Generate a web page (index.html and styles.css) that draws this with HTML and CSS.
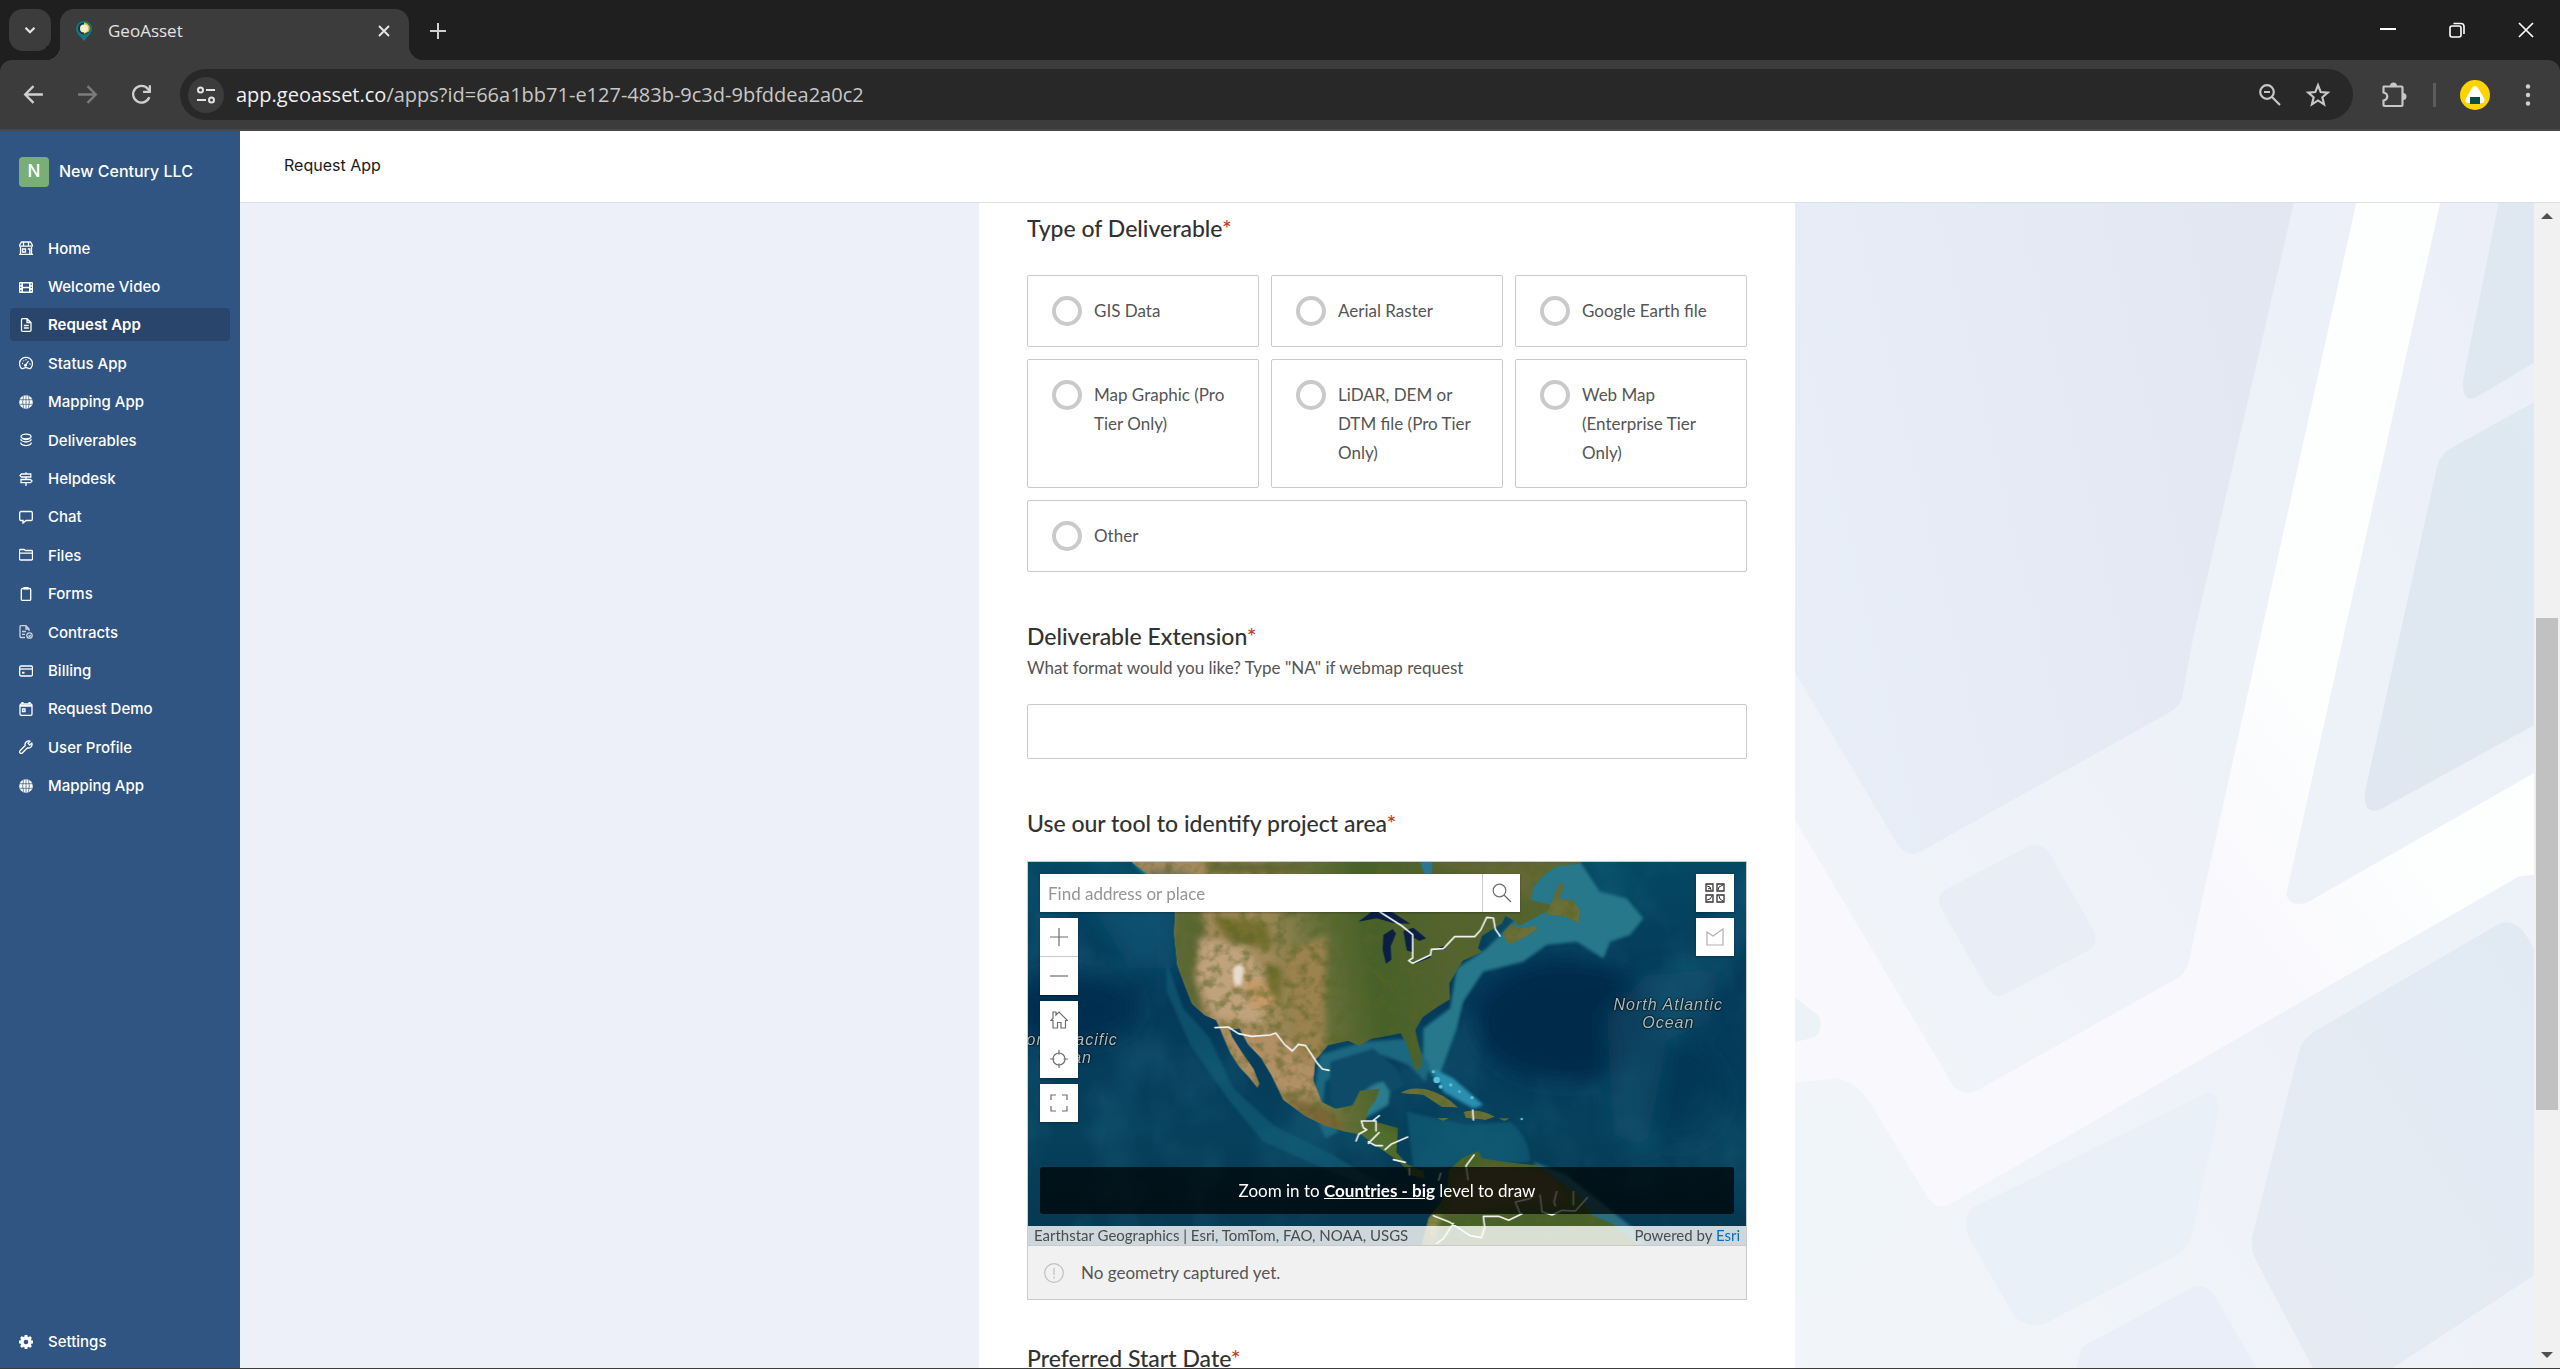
FILE: index.html
```html
<!DOCTYPE html>
<html lang="en">
<head>
<meta charset="utf-8">
<title>GeoAsset</title>
<meta name="viewport" content="width=device-width, initial-scale=1">
<link rel="stylesheet" href="styles.css">
</head>
<body>
<div class="browser">
  <div class="tabstrip">
    <button class="tab-search" aria-label="Search tabs"><svg viewBox="0 0 24 24" width="18" height="18"><path d="M6 9l6 6 6-6" fill="none" stroke="#e3e3e3" stroke-width="3"/></svg></button>
    <div class="tab">
      <svg class="favicon" viewBox="0 0 16 20" width="16" height="20"><path d="M8 0a8 8 0 0 1 8 8c0 4-4 7-8 12C4 15 0 12 0 8a8 8 0 0 1 8-8z" fill="#14787f"/><circle cx="8" cy="7.500" r="6" fill="#16344f"/><path d="M8 1.500a6 6 0 0 1 5 9L8 13z" fill="#e9b949"/><circle cx="8" cy="7.500" r="4" fill="#f4f0c8"/></svg>
      <span class="tab-title">GeoAsset</span>
      <button class="icon-btn" aria-label="Close tab"><svg viewBox="0 0 12 12" width="12" height="12"><path d="M1 1l10 10M11 1L1 11" stroke="#e3e3e3" stroke-width="2"/></svg></button>
    </div>
    <button class="icon-btn new-tab" aria-label="New tab"><svg viewBox="0 0 16 16" width="16" height="16"><path d="M8 0v16M0 8h16" stroke="#d0d0d0" stroke-width="2"/></svg></button>
    <div class="window-controls">
      <button class="icon-btn" aria-label="Minimize"><svg viewBox="0 0 16 16" width="16" height="16"><path d="M0 7h16" stroke="#fff" stroke-width="2"/></svg></button>
      <button class="icon-btn" aria-label="Restore"><svg viewBox="0 0 16 16" width="16" height="16"><g fill="none" stroke="#fff" stroke-width="1.600"><rect x="1" y="4" width="11" height="11" rx="2"/><path d="M4.500 1.500H12a3 3 0 0 1 3 3V12"/></g></svg></button>
      <button class="icon-btn" aria-label="Close"><svg viewBox="0 0 16 16" width="16" height="16"><path d="M1 1l14 14M15 1L1 15" stroke="#fff" stroke-width="1.700"/></svg></button>
    </div>
  </div>
  <div class="toolbar">
    <button class="icon-btn nav-btn" aria-label="Back"><svg viewBox="0 0 24 24" width="25" height="25"><path d="M21 12H4M12 4l-8 8 8 8" fill="none" stroke="#d0d0d0" stroke-width="2.200"/></svg></button>
    <button class="icon-btn nav-btn" aria-label="Forward"><svg viewBox="0 0 24 24" width="25" height="25"><path d="M3 12h17M12 4l8 8-8 8" fill="none" stroke="#7c7c7c" stroke-width="2.200"/></svg></button>
    <button class="icon-btn nav-btn" aria-label="Reload"><svg viewBox="0 0 24 24" width="25" height="25"><path d="M19.500 14.500A8 8 0 1 1 18 6.500l2 2.500" fill="none" stroke="#d0d0d0" stroke-width="2.200"/><path d="M20 3v6.500h-6.500" fill="none" stroke="#d0d0d0" stroke-width="2.200"/></svg></button>
    <div class="omnibox">
      <button class="site-info" aria-label="Site information"><svg viewBox="0 0 20 20" width="20" height="20"><g fill="none" stroke="#e3e3e3" stroke-width="2"><circle cx="4.500" cy="5" r="2.500"/><path d="M10 5h9M1 15h9"/><circle cx="15.500" cy="15" r="2.500"/></g></svg></button>
      <span class="url"><span class="url-host">app.geoasset.co</span>/apps?id=66a1bb71-e127-483b-9c3d-9bfddea2a0c2</span>
      <button class="icon-btn nav-btn" aria-label="Zoom"><svg viewBox="0 0 24 24" width="24" height="24"><g fill="none" stroke="#c7c7c7" stroke-width="2.200"><circle cx="9" cy="9" r="6.800"/><path d="M14 14l8 8M6 9h6"/></g></svg></button>
      <button class="icon-btn nav-btn" aria-label="Bookmark this tab"><svg viewBox="0 0 24 24" width="26" height="26"><path d="M12 3l2.500 6.300 6.500.5-5 4.300 1.600 6.500L12 17l-5.600 3.600L8 14.100 3 9.800l6.500-.5z" fill="none" stroke="#c7c7c7" stroke-width="2"/></svg></button>
    </div>
    <button class="icon-btn nav-btn extensions" aria-label="Extensions"><svg viewBox="0 0 26 26" width="26" height="26"><path d="M3 4.500h17.500a1 1 0 0 1 1 1V23a1 1 0 0 1-1 1h-17a1 1 0 0 1-1-1v-4.500c5-1 5-7 0-8V5.500a1 1 0 0 1 .5-1z" fill="none" stroke="#c7c7c7" stroke-width="2.200"/><path d="M9 4a3.500 3.500 0 0 1 7 0zM22 11a3.500 3.500 0 0 1 0 7z" fill="#c7c7c7"/></svg></button>
    <span class="toolbar-divider"></span>
    <button class="icon-btn profile" aria-label="Profile"><svg viewBox="0 0 30 30" width="30" height="30"><circle cx="15" cy="15" r="15" fill="#fdd400"/><path d="M12 8q3-4 6 0l6 10q2 5-3 5H9q-5 0-3-5z" fill="#fff"/><path d="M10 17h10v7H10z" fill="#0a4b46"/></svg></button>
    <button class="icon-btn menu" aria-label="Menu"><svg viewBox="0 0 6 22" width="6" height="22"><g fill="#d0d0d0"><circle cx="3" cy="2.500" r="2.200"/><circle cx="3" cy="11" r="2.200"/><circle cx="3" cy="19.500" r="2.200"/></g></svg></button>
  </div>
</div>

<div class="app">
  <aside class="sidebar">
    <div class="org"><span class="org-logo">N</span><span class="org-name">New Century LLC</span></div>
    <nav class="nav" aria-label="Main">
      <a href="#"><svg viewBox="0 0 14 14"><path d="M2.500 1h9L13.300 4v1.200H.7V4z" class="ln"/><path d="M1.500 6v7M12.500 6v7M3.500 8h3v3h-3zM8.800 8h2v5M0 13.300h14M4.500 1v4M9.500 1v4" class="ln"/></svg>Home</a>
      <a href="#"><svg viewBox="0 0 14 14"><path fill-rule="evenodd" d="M1 2h12a1 1 0 0 1 1 1v9a1 1 0 0 1-1 1H1a1 1 0 0 1-1-1V3a1 1 0 0 1 1-1zm3 1.500v3.200h6V3.500zm0 4.700v3.300h6V8.200zM1.200 3.500v1.400h1.200V3.500zm0 3.200v1.400h1.200V6.700zm0 3.200v1.400h1.200V9.900zm10.400-6.400v1.400h1.200V3.500zm0 3.200v1.400h1.200V6.700zm0 3.200v1.400h1.200V9.900z" fill="#fff"/></svg>Welcome Video</a>
      <a href="#" class="active" aria-current="page"><svg viewBox="0 0 14 14"><path d="M3.500.7H8L12 4.500v7.800a1 1 0 0 1-1 1H3.500a1 1 0 0 1-1-1V1.700a1 1 0 0 1 1-1zM8 1v3.500h4M4.800 7.500h5M4.800 10h5" class="ln"/></svg>Request App</a>
      <a href="#"><svg viewBox="0 0 14 14"><path d="M2.500 12.500C-2 7 2 1.300 7 1.300s9 5.700 4.500 11.200c-1.500.7-2-.8-4.500-.8s-3 1.500-4.500.8z" class="ln"/><path d="M6.500 9.500L9.500 5M3 7.500h1M10.500 8h1M4.500 4.500l.5.500M7 3.200v1" class="ln"/><circle cx="6.500" cy="9.300" r="1.500" fill="#fff"/></svg>Status App</a>
      <a href="#"><svg viewBox="0 0 14 14"><circle cx="7" cy="7" r="6.800" fill="#fff"/><path d="M7 .5v13M1 4.700h12M1 9.300h12M4.500 1.200q-1.600 5.800 0 11.600M9.500 1.200q1.600 5.800 0 11.600" class="cut"/></svg>Mapping App</a>
      <a href="#"><svg viewBox="0 0 14 14"><ellipse cx="7" cy="3.500" rx="5" ry="2.300" class="ln"/><path d="M2 6q-1 2 5 3 6-1 5-3M2 9.500q-1 2.500 5 3.200 6-.7 5-3.200M3 5.500q4 2 8 0" class="ln"/></svg>Deliverables</a>
      <a href="#"><svg viewBox="0 0 14 14"><path d="M2.500 2h9.300v3H2.500L1 3.500zM2 7.500h9.500L13 9l-1.500 1.700H2zM7 .3V2M7 5v2.500M7 10.700V14" class="ln"/></svg>Helpdesk</a>
      <a href="#"><svg viewBox="0 0 14 14"><path d="M2 1.500h10a1.300 1.300 0 0 1 1.300 1.300v6.400A1.300 1.300 0 0 1 12 10.500H7L4 13v-2.500H2A1.300 1.300 0 0 1 .7 9.200V2.800A1.300 1.300 0 0 1 2 1.500z" class="ln"/></svg>Chat</a>
      <a href="#"><svg viewBox="0 0 14 14"><path d="M.7 5.200h12.600M1.500 1.500H5l1.500 1h6a1 1 0 0 1 1 1V11a1 1 0 0 1-1 1h-11a1 1 0 0 1-1-1V2.500a1 1 0 0 1 1-1z" class="ln"/></svg>Files</a>
      <a href="#"><svg viewBox="0 0 14 14"><rect x="2.300" y="1.500" width="9.400" height="12" rx="1.300" class="ln"/><path d="M4.500 0h5v2.500h-5z" fill="#fff"/></svg>Forms</a>
      <a href="#"><svg viewBox="0 0 14 14" class="faint"><path d="M6 12.500H2a1 1 0 0 1-1-1V1.700a1 1 0 0 1 1-1h5L10 4v2M7 1v3h3M3 6.500h4M3 9.300h3" class="ln"/><circle cx="10.500" cy="10.500" r="2.700" class="ln"/><path d="M9.500 10.500l1 1 1.200-1.500" class="ln"/></svg>Contracts</a>
      <a href="#"><svg viewBox="0 0 14 14"><rect x=".7" y="2" width="12.800" height="10" rx="1.500" class="ln"/><path d="M.7 5h12.600" class="ln"/><path d="M3 7.800h2.500v1.800H3z" fill="#fff"/></svg>Billing</a>
      <a href="#"><svg viewBox="0 0 14 14"><rect x="1" y="2" width="12" height="11.300" rx="1.300" class="ln"/><path d="M1 3.800h12M3.500 0v2M10.500 0v2" class="ln thick"/><path d="M3.500 7h2.500v2.500H3.500z" class="ln"/></svg>Request Demo</a>
      <a href="#"><svg viewBox="0 0 14 14"><path d="M10.800 1.200A3.500 3.500 0 0 0 6.200 5.500L1 10.700a1.500 1.500 0 0 0 2.300 2.300l5.200-5.200a3.500 3.500 0 0 0 4.300-4.600L10.700 5 9 3.300z" class="ln"/></svg>User Profile</a>
      <a href="#"><svg viewBox="0 0 14 14"><circle cx="7" cy="7" r="6.800" fill="#fff"/><path d="M7 .5v13M1 4.700h12M1 9.300h12M4.500 1.200q-1.600 5.800 0 11.600M9.500 1.200q1.600 5.800 0 11.600" class="cut"/></svg>Mapping App</a>
    </nav>
    <nav class="nav-foot" aria-label="Account">
      <a href="#"><svg viewBox="0 0 14 14"><circle cx="7" cy="7" r="4" fill="none" stroke="#fff" stroke-width="3.400"/><path d="M7 0v2M7 12v2M0 7h2M12 7h2M2 2l1.500 1.500M10.500 10.500L12 12M12 2l-1.500 1.500M3.500 10.500L2 12" stroke="#fff" stroke-width="2.800"/></svg>Settings</a>
    </nav>
  </aside>

  <div class="page">
    <header class="page-head">Request App</header>
    <div class="scroller">
      <main class="canvas">
        <svg class="backdrop" viewBox="0 0 1516 1568" preserveAspectRatio="none" aria-hidden="true">
          <defs>
            <linearGradient id="slab" x1="0" y1="0.600" x2="1" y2="0.300"><stop offset="0" stop-color="#e8eef7"/><stop offset="1" stop-color="#e2e7f1"/></linearGradient>
            <linearGradient id="teal" x1="1" y1="0" x2="0" y2="1"><stop offset="0" stop-color="#dee9f1"/><stop offset="1" stop-color="#e0e7f0"/></linearGradient>
            <linearGradient id="low" x1="1" y1="0" x2="0" y2="1"><stop offset="0" stop-color="#e1eaf3"/><stop offset="1" stop-color="#e6ebf3"/></linearGradient>
            <linearGradient id="road" x1="0" y1="1" x2="1" y2="0"><stop offset="0" stop-color="#f9f9fd"/><stop offset="0.450" stop-color="#f9f9fd"/><stop offset="0.600" stop-color="#fdfefe"/><stop offset="1" stop-color="#fdfefe"/></linearGradient>
            <linearGradient id="base" x1="0" y1="1" x2="1" y2="0"><stop offset="0" stop-color="#f2f6fa"/><stop offset="0.500" stop-color="#eef2f8"/><stop offset="1" stop-color="#eceff8"/></linearGradient>
            <filter id="soft" x="-10%" y="-10%" width="120%" height="120%"><feGaussianBlur stdDeviation="12"/></filter>
          </defs>
          <rect width="1516" height="1568" fill="url(#base)"/>
          <path d="M0 0H1035L835 580Q820 630 812 665 805 680 785 686L290 872Q262 882 243 865L30 625 0 600z" fill="url(#slab)"/>
          <path d="M1445 0h71v215l-120 48q-25 4-22-25z" fill="#dfe8f0"/>
          <path d="M1516 268v435l-310 114q-34 6-28-26L1322 355q6-16 25-24z" fill="url(#teal)"/>
          <path d="M335 925l170-60q30-5 45 15l85 100q10 20-12 26l-170 60q-20 6-35-12l-90-105q-10-15 7-24z" fill="#e8edf6"/>
          <path d="M1160 0h168L1020 930q5 18 40 12l456-175v137l-30 2L345 1348q-25 8-45-12L190 1215q-25-30-70-37l-120 8V790l350 395q18 18 50 10l405-153q20-8 27-45z" fill="url(#road)"/>
          <path d="M0 1050l85 45q10 25-20 30l-65 10z" fill="#edf2f9"/>
          <g filter="url(#soft)">
            <path d="M0 1230q90-20 150 20l90 100-100 90L0 1480z" fill="#eff5f8"/>
          </g>
          <path d="M860 1198q30 0 22 35l-50 150q-8 25-35 35l-260 90q-30 8-60-8l-95-110q-12-25 10-38z" fill="#e9f0f8"/>
          <path d="M1516 1005q-30-45-70-35l-370 145q-26 10-34 35l-90 240q-4 18 6 32l115 146h160l283-125z" fill="url(#low)"/>
          <path d="M610 1540l220-80q30-8 50 15l80 93H600z" fill="#e9eef8"/>
        </svg>
        <form class="form">
          <fieldset class="field">
            <legend>Type of Deliverable<em>*</em></legend>
            <div class="options">
              <label><input type="radio" name="type"><span>GIS Data</span></label>
              <label><input type="radio" name="type"><span>Aerial Raster</span></label>
              <label><input type="radio" name="type"><span>Google Earth file</span></label>
              <label><input type="radio" name="type"><span>Map Graphic (Pro Tier Only)</span></label>
              <label><input type="radio" name="type"><span>LiDAR, DEM or DTM file (Pro Tier Only)</span></label>
              <label><input type="radio" name="type"><span>Web Map (Enterprise Tier Only)</span></label>
              <label class="wide"><input type="radio" name="type"><span>Other</span></label>
            </div>
          </fieldset>

          <div class="field">
            <label class="title" for="ext">Deliverable Extension<em>*</em></label>
            <p class="hint">What format would you like? Type "NA" if webmap request</p>
            <input class="text" id="ext" type="text">
          </div>

          <div class="field geo-field">
            <h2 class="title">Use our tool to identify project area<em>*</em></h2>
            <div class="geo">
              <div class="map">
                <svg class="imagery" viewBox="24 21 2154 1149" preserveAspectRatio="none" role="img" aria-label="Satellite map of North America">
                  <defs>
                    <linearGradient id="sea" x1="0" y1="0" x2="0" y2="1"><stop offset="0" stop-color="#044863"/><stop offset="0.350" stop-color="#05395a"/><stop offset="0.700" stop-color="#06415c"/><stop offset="1" stop-color="#063750"/></linearGradient>
                    <linearGradient id="ground" gradientUnits="userSpaceOnUse" x1="480" y1="500" x2="1300" y2="380"><stop offset="0" stop-color="#a58a60"/><stop offset="0.350" stop-color="#a18a5a"/><stop offset="0.540" stop-color="#667039"/><stop offset="0.720" stop-color="#466129"/><stop offset="1" stop-color="#546430"/></linearGradient>
                    <filter id="b30" x="-30%" y="-30%" width="160%" height="160%"><feGaussianBlur stdDeviation="34"/></filter>
                    <filter id="b10" x="-30%" y="-30%" width="160%" height="160%"><feGaussianBlur stdDeviation="10"/></filter>
                    <filter id="b4" x="-30%" y="-30%" width="160%" height="160%"><feGaussianBlur stdDeviation="5"/></filter>
                    <filter id="rough" x="0" y="0" width="100%" height="100%"><feTurbulence type="fractalNoise" baseFrequency="0.030" numOctaves="5" seed="8"/><feColorMatrix values="0 0 0 0 0.100  0 0 0 0 0.130  0 0 0 0 0.020  3.200 0 0 0 -1.450"/></filter>
                    <filter id="swell" x="0" y="0" width="100%" height="100%"><feTurbulence type="fractalNoise" baseFrequency="0.005 0.004" numOctaves="4" seed="3"/><feColorMatrix values="0 0 0 0 0.070  0 0 0 0 0.440  0 0 0 0 0.540  1.600 0 0 0 -0.700"/></filter>
                    <path id="na" d="M335 21l45 35 60 60 25 60-3 60 10 95 22 60 22 55 38 35 34 15 12 25 12 30 20 45 26 40 28 30 26 32 6-12-18-45-32-45-32-50-8-22 30-4 26 48 40 42 30 50 36 75 66 48 56 28 58 18 54 10 60 44 55 38 35 40 40 10-4-22-50-22-32-36 6-72-52-14-45-8 8-32 22-30 12-34-60 6-20 44-52 10-42-20-25-64 6-62 38-44 60-14 34 16 36-22 48-8 40-8 20 38 14 44 12 28 12-4 6-34-14-52-6-30 22-38 48-34 34-20-2-48 40-68 40-18 18-8-12-12 12-36 60-38 10-22 22 12 18 18 40-20 44-24 18-18-32-8-34-8 8-40 30-34 40-28 60-6 64-34 30-50V21z"/>
                    <path id="sa" d="M1205 1170l20-80 38-50 20-50 2-45 45-38 44-20 12 22 70 12 96 10 62 46 60 40 40 62 70 31 72 60z"/>
                    <path id="isles" d="M1140 715q30-22 80-12 55 14 95 55l-50-2-55-36zM1330 770q45-14 95 15l-28 10-60-6zM1250 790l40-2-20 10zM1435 790l36 0-18 8zM1580 175l38-90 14 4-14 44 40 2 22 30-4 40-40-20-56-6zM1465 270l-18-36 26-28 22 14 44-8 18 6-40 28z"/>
                    <clipPath id="land"><use href="#na"/><use href="#sa"/><use href="#isles"/></clipPath>
                  </defs>
                  <rect x="24" y="21" width="2154" height="1149" fill="url(#sea)"/>
                  <rect x="24" y="21" width="2154" height="1149" filter="url(#swell)" opacity="0.220"/>
                  <g filter="url(#b30)">
                    <ellipse cx="1640" cy="500" rx="270" ry="180" fill="#032b4a"/>
                    <ellipse cx="1980" cy="720" rx="140" ry="150" fill="#04304f" opacity="0.500"/>
                    <ellipse cx="150" cy="460" rx="200" ry="100" fill="#042f50"/>
                    <path d="M1760 480l120-120 220-20-30 160-130 60-60 320-100-40z" fill="#0f5670" opacity="0.500"/>
                    <path d="M160 60h300v280H330z" fill="#16587a" opacity="0.600"/>
                  </g>
                  <g filter="url(#b4)">
                    <path d="M1210 520l80-60 20-120 90-60 80-80 60-180h140l60 90 80 20 50 60-40 50-60 20-20 50-80-50-90 10-70 50-120 30-60 90-20 80-40 110-20 50-40-60z" fill="#28788a"/>
                    <path d="M900 600l130-40 140-10 60 80-14 50-50-50-80-30-100 20-70 60-10 90 50 60-40 20-40-90z" fill="#1c6880"/>
                    <path d="M930 620l130-40 70 60 20 50-60 30-50 60-80 10-30-60z" fill="#0d4c68"/>
                    <path d="M990 770q40-80 100-90l20 30-5 40-70 40z" fill="#2b7b8e"/>
                    <path d="M1240 640l60 30 90 80-30 10-90-50z" fill="#2b8fb0"/>
                    <path d="M440 180l0 140 50 140 80 90 70 150 120 110 180 90 180 110-10 10-200-80-180-80-100-120-120-170-70-160z" fill="#14607c" opacity="0.550"/>
                    <path d="M1160 770l180 40 130-10q60 50 60 120l-140 10-210 10z" fill="#12607a" opacity="0.600"/>
                    <path d="M1540 920l100 40 200 160 40 50h-70l-240-180z" fill="#296e80"/>
                    <path d="M380 21l-45 0 60 60 50 40z" fill="#2a7c92"/>
                  </g>
                  <use href="#na" fill="url(#ground)"/>
                  <g clip-path="url(#land)">
                    <use href="#sa" fill="#476229"/>
                    <use href="#isles" fill="#6a7038"/>
                    <g filter="url(#b10)">
                      <path d="M460 160h80l20 90-40 80 30 140-30 10-70-160z" fill="#5d6936"/>
                      <path d="M540 250l140 20 60 110-10 130-140-20-60-110z" fill="#c0a27c"/>
                      <path d="M570 180l170 20 20 80-130-10zM740 330l50 10-10 110-50-40z" fill="#74702f"/>
                      <path d="M680 360l60 30 30 60-60 20-30-50z" fill="#c69a66"/>
                      <path d="M600 510l180 30 90 60 50 100-20 40-70-20-160-80z" fill="#b29066"/>
                      <path d="M790 300l130-60-10 380-80-10z" fill="#9c824f"/>
                      <path d="M770 720l150 40 60 60-60 10z" fill="#7b6638"/>
                      <path d="M1000 800l160 40 0 90-80-50z" fill="#50702f"/>
                      <path d="M1290 960l120-30 180 20 60 90-240 20-130 20z" fill="#665f38"/>
                      <path d="M1205 1170l20-90 40-10-20 100z" fill="#8a8a4c"/>
                      <path d="M560 21h300v35H560zM1230 21h420v110h-150l-60-60z" fill="#646736"/>
                      <path d="M380 40l130 10 0 60-90 0z" fill="#7a745d"/>
                    </g>
                    <rect x="300" y="21" width="1650" height="1149" filter="url(#rough)" opacity="0.550"/>
                    <path d="M640 335l20-8 12 14-8 48-18 4-8-24z" fill="#e9dccb" filter="url(#b4)"/>
                  </g>
                  <g fill="#0b1f44">
                    <path d="M1015 200l40-30h60l55 36-50-2-50-14z"/>
                    <path d="M1090 240l28-18 10 14-16 38 2 40-16 12-10-40z"/>
                    <path d="M1150 228l30-10 38 32-20 8-16-10-6 44-16-6z"/>
                    <path d="M1180 320l54-22-4 10-46 18zM1236 286l44-16-6 14z"/>
                  </g>
                  <path d="M1200 21h36v36h-22z" fill="#2a7794"/>
                  <g fill="#5cc3dd"><circle cx="1250" cy="675" r="10"/><circle cx="1262" cy="695" r="6"/><circle cx="1292" cy="690" r="5"/><circle cx="1318" cy="710" r="4"/><circle cx="1356" cy="728" r="5"/><circle cx="1240" cy="650" r="5"/><circle cx="1505" cy="792" r="4"/></g>
                  <g class="border-line">
                    <path d="M585 518l40-2 30 20 40 8 56-4 16-6 26 34 24 20 18-20 22 4 36 54 14 16 20 4"/>
                    <path d="M1080 171l66 42 32 26v70l-12 8 12 8 54-26 2-16 36-2 34-36h60l18-20 18-38 20 2 6 34 14 20"/>
                    <path d="M1068 828v-30h-44l6 20 10 6-24 14-8 20M1060 796l18-14M1045 865l32-32M1045 860l22 12 20 0M1095 884l18-16 50-22M1120 914l36 8"/>
                    <path d="M1358 765l2 30M1362 900l-24 32 6 42M1168 940v20M1262 955l-6 20"/>
                    <path d="M1240 1082l50 20 60 40 34 6 10-30-4-34 46 0 30 12 40-20M1300 1105l-30 46-20 14M1500 1075l-14-34 44-10 10-14M1560 1020l6 50 30 10 30-14 40 2 36-40M1610 1010l-8 30 4 12M1660 1010v40"/>
                  </g>
                </svg>
                <span class="sea-label atlantic">North Atlantic<br>Ocean</span>
                <span class="sea-label pacific">North Pacific<br>Ocean</span>

                <div class="search">
                  <input type="text" placeholder="Find address or place" aria-label="Find address or place">
                  <button type="button" aria-label="Search"><svg viewBox="0 0 20 20" width="20" height="20"><g fill="none" stroke="#6e6e6e" stroke-width="1.200"><circle cx="7.500" cy="7.500" r="6.300"/><path d="M12 12l7 7"/></g></svg></button>
                </div>
                <div class="tools left">
                  <div class="group split">
                    <button type="button" aria-label="Zoom in"><svg viewBox="0 0 18 18" width="18" height="18"><path d="M9 0v18M0 9h18" stroke="#6e6e6e" stroke-width="1.200"/></svg></button>
                    <button type="button" aria-label="Zoom out"><svg viewBox="0 0 18 18" width="18" height="18"><path d="M0 9h18" stroke="#6e6e6e" stroke-width="1.200"/></svg></button>
                  </div>
                  <div class="group">
                    <button type="button" aria-label="Default extent"><svg viewBox="0 0 18 18" width="18" height="18"><path d="M1 9.500l2-2V1h3v3l3-3 8.500 8.500H15.500V17H11v-5.500H7.500V17H3V9.500z" fill="none" stroke="#6e6e6e" stroke-width="1.200"/></svg></button>
                    <button type="button" aria-label="Find my location"><svg viewBox="0 0 18 18" width="18" height="18"><g fill="none" stroke="#6e6e6e" stroke-width="1.200"><circle cx="9" cy="9" r="6"/><path d="M9 0v4.500M9 13.500V18M0 9h4.500M13.500 9H18"/></g></svg></button>
                  </div>
                  <div class="group">
                    <button type="button" aria-label="Full screen"><svg viewBox="0 0 18 18" width="18" height="18"><path d="M1 6V1h5M12 1h5v5M17 12v5h-5M6 17H1v-5" fill="none" stroke="#6e6e6e" stroke-width="1.200"/></svg></button>
                  </div>
                </div>
                <div class="tools right">
                  <div class="group"><button type="button" aria-label="Basemap gallery"><svg viewBox="0 0 20 20" width="20" height="20"><g fill="none" stroke="#333" stroke-width="1.300"><path d="M1 1h7v7H1zM12 1h7v7h-7zM1 12h7v7H1zM12 12h7v7h-7z"/><path d="M2 3l3 1 1 3M13 7l1-3 4-2M2 17l3-1 2-3M14 13l1 3 3 2M3 6l2-1" stroke-width="1"/></g></svg></button></div>
                  <div class="group"><button type="button" aria-label="Draw polygon"><svg viewBox="0 0 18 18" width="18" height="18"><path d="M1 4l6 4 10-7v16H1z" fill="none" stroke="#b0b0b0" stroke-width="1.200"/></svg></button></div>
                </div>
                <p class="banner">Zoom in to <a href="#">Countries - big</a> level to draw</p>
                <div class="credits"><span>Earthstar Geographics | Esri, TomTom, FAO, NOAA, USGS</span><span>Powered by <a href="#">Esri</a></span></div>
              </div>
              <div class="status"><svg viewBox="0 0 20 20" width="20" height="20"><g fill="none" stroke="#c0c0c0" stroke-width="1.200"><circle cx="10" cy="10" r="9.300"/><path d="M10 5v7M10 13.500v2"/></g></svg>No geometry captured yet.</div>
            </div>
          </div>

          <div class="field">
            <h2 class="title">Preferred Start Date<em>*</em></h2>
          </div>
        </form>
      </main>
      <div class="scrollbar" aria-hidden="true"><svg viewBox="0 0 12 6" width="12" height="6"><path d="M0 6l6-6 6 6z" fill="#505050"/></svg><span class="thumb"></span><svg viewBox="0 0 12 6" width="12" height="6"><path d="M0 0l6 6 6-6z" fill="#505050"/></svg></div>
    </div>
  </div>
</div>
</body>
</html>
```
FILE: styles.css
```css
* { box-sizing: border-box; }
html, body { height: 100%; }
body {
  margin: 0;
  display: flex;
  flex-direction: column;
  overflow: hidden;
  background: #1f1f1f;
  border-bottom: 1px solid #3c3c3c;
  font-family: Inter, sans-serif;
}
button { border: 0; padding: 0; background: none; font: inherit; display: grid; place-items: center; }
svg { display: block; flex: none; }
h2, p { margin: 0; }

/* Browser frame */
.browser { flex: none; font-family: "Open Sans", sans-serif; }
.tabstrip { display: flex; align-items: center; height: 60px; padding: 9px 8px 0 9px; }
.tab-search { width: 42px; height: 42px; border-radius: 14px; background: #3c3c3c; align-self: flex-start; }
.tab {
  display: flex; align-items: center; gap: 16px;
  width: 349px; height: 51px; margin-left: 9px; padding: 0 14px 8px 16px;
  background: #3c3c3c; border-radius: 14px 14px 0 0;
  position: relative;
}
.tab::before, .tab::after { content: ""; position: absolute; bottom: 0; width: 14px; height: 14px; }
.tab::before { left: -14px; background: radial-gradient(circle at 0 0, #1f1f1f 14px, #3c3c3c 14px); }
.tab::after { right: -14px; background: radial-gradient(circle at 100% 0, #1f1f1f 14px, #3c3c3c 14px); }
.tab-title { flex: 1; font-size: 17px; color: #e3e3e3; }
.icon-btn { width: 22px; height: 22px; }
.new-tab { margin: 0 0 8px 18px; }
.window-controls { display: flex; gap: 47px; margin: 0 15px 10px auto; }
.toolbar {
  display: flex; align-items: center; height: 71px; padding: 0 21px 0 20px;
  background: #3c3c3c; border-bottom: 2px solid #484848; border-radius: 12px 12px 0 0;
}
.nav-btn { width: 26px; height: 26px; margin-right: 28px; }
.omnibox {
  flex: 1; display: flex; align-items: center; height: 51px;
  margin-left: -2px; padding-left: 8px; border-radius: 26px; background: #282828;
}
.omnibox .nav-btn { margin: 0 22px 0 0; }
.site-info { width: 36px; height: 36px; border-radius: 50%; background: #3c3c3c; }
.url { flex: 1; margin-left: 12px; font-size: 20px; color: #c7c7c7; white-space: nowrap; }
.url-host { color: #f0f0f0; }
.extensions { margin: 0 26px 0 28px; }
.toolbar-divider { width: 3px; height: 24px; background: #5c5c5c; }
.profile { width: 30px; height: 30px; margin-left: 24px; }
.menu { margin-left: 27px; }

/* App shell */
.app { flex: 1; min-height: 0; display: flex; }
.sidebar {
  flex: none; width: 240px; padding: 26px 10px 10px;
  display: flex; flex-direction: column;
  background: #305583; color: #fff;
}
.org { display: flex; align-items: center; gap: 10px; padding-left: 9px; margin-bottom: 42px; }
.org-logo {
  width: 30px; height: 30px; border-radius: 4px; background: #7aae79;
  font-size: 17px; font-weight: 500; line-height: 28px; text-align: center;
}
.org-name { font-size: 16px; font-weight: 500; line-height: 28px; padding-bottom: 2px; }
.nav { display: grid; grid-auto-rows: 1fr; min-height: 576px; align-items: center; }
.nav a, .nav-foot a {
  display: flex; align-items: center; gap: 15px;
  height: 33px; padding-left: 9px; border-radius: 4px;
  color: #fff; font-size: 15px; font-weight: 500; text-decoration: none;
}
.nav a.active { background: #2a456b; font-weight: 600; }
.nav svg, .nav-foot svg { width: 14px; height: 14px; }
.nav-foot { margin-top: auto; }
.ln { fill: none; stroke: #fff; stroke-width: 1.300; }
.thick { stroke-width: 2; }
.cut { fill: none; stroke: #305583; stroke-width: 0.700; }
.faint { opacity: 0.75; }

.page { flex: 1; min-width: 0; display: flex; flex-direction: column; background: #fff; }
.page-head {
  flex: none; height: 72px; padding-left: 44px; border-bottom: 1px solid #dcdfe3;
  line-height: 68px; font-size: 16px; color: #1a1a1a;
}
.scroller { flex: 1; min-height: 0; display: flex; }
.canvas { flex: 1; min-width: 0; position: relative; overflow: hidden; background: #edf0f9; }
.backdrop { position: absolute; top: 0; right: 0; width: 33%; height: 100%; }
.scrollbar {
  flex: none; width: 26px; padding: 10px 2px;
  display: flex; flex-direction: column; align-items: center; background: #f1f1f1;
}
.scrollbar .thumb { width: 100%; height: 43%; background: #c1c1c1; margin: 399px 0 auto; }

/* Request form */
.form {
  position: relative; max-width: 816px; min-height: 100%; margin: 0 auto; padding: 11px 48px 0;
  background: #fff; color: #555;
  font-family: Lato, sans-serif; font-size: 17px;
}
.field { margin: 0 0 50px; padding: 0; border: 0; }
.geo-field { margin-bottom: 44px; }
legend, .title { display: block; padding: 0; font-size: 23px; font-weight: 500; line-height: 28px; color: #323232; }
em { font-style: normal; color: #c43d21; }
.options {
  display: grid; grid-template-columns: repeat(3, 1fr); grid-auto-rows: minmax(72px, auto);
  gap: 12px; margin-top: 33px;
}
.options label {
  display: flex; align-items: flex-start; gap: 12px; padding: 20px 24px;
  border: 1px solid #cacaca; border-radius: 2px; line-height: 29px;
}
.options .wide { grid-column: 1 / -1; }
.options input {
  appearance: none; flex: none; width: 30px; height: 30px; margin: 0 0 -1px;
  border: 4px solid #cacaca; border-radius: 50%; background: #fff;
}
.hint { margin: 4px 0 22px; line-height: 28px; }
.text { display: block; width: 100%; height: 55px; padding: 0 16px; border: 1px solid #cacaca; border-radius: 2px; font: inherit; }
.geo { margin-top: 24px; border: 1px solid #cacaca; background: #f1f1f1; }
.map { position: relative; height: 383px; overflow: hidden; background: #053a56; }
.imagery { position: absolute; inset: 0; width: 100%; height: 100%; }
.border-line { fill: none; stroke: #f2f2ee; stroke-width: 5; stroke-linejoin: round; stroke-linecap: round; }
.sea-label {
  position: absolute; text-align: center; white-space: nowrap;
  font: italic 16px/18px "Liberation Sans", sans-serif; letter-spacing: 1px;
  color: #a9bcc0; text-shadow: 0 0 2px #000, 0 0 2px #000;
}
.atlantic { top: 134px; right: 23px; }
.pacific { top: 169px; left: -14px; }
.search {
  position: absolute; top: 12px; left: 12px; width: 480px; height: 38px;
  display: flex; background: #fff; box-shadow: 0 1px 2px rgba(0, 0, 0, 0.3);
}
.search input { flex: 1; min-width: 0; border: 0; padding: 0 8px; background: none; font: inherit; color: #323232; }
.search input::placeholder { color: #959595; }
.search button { width: 38px; border-left: 1px solid #cacaca; }
.tools { position: absolute; display: grid; gap: 6px; }
.left { top: 56px; left: 12px; }
.right { top: 12px; right: 12px; }
.group { background: #fff; box-shadow: 0 1px 2px rgba(0, 0, 0, 0.3); }
.group button { width: 38px; height: 38px; }
.group button + button { height: 39px; }
.split button + button { border-top: 1px solid #cacaca; }
.banner {
  position: absolute; left: 12px; right: 12px; bottom: 31px;
  border-radius: 3px; background: rgba(0, 0, 0, 0.7); color: #fff;
  line-height: 47px; text-align: center;
}
.banner a { color: #fff; font-weight: 700; }
.credits {
  position: absolute; left: 0; right: 0; bottom: 0;
  display: flex; justify-content: space-between; padding: 0 6px;
  background: rgba(255, 255, 255, 0.8); color: #4c4c4c; font-size: 15px; line-height: 19px;
}
.credits a { color: #0070cc; text-decoration: none; }
.status {
  display: flex; align-items: center; gap: 17px; height: 54px; padding-left: 16px;
  border-top: 1px solid #cacaca;
}
```
